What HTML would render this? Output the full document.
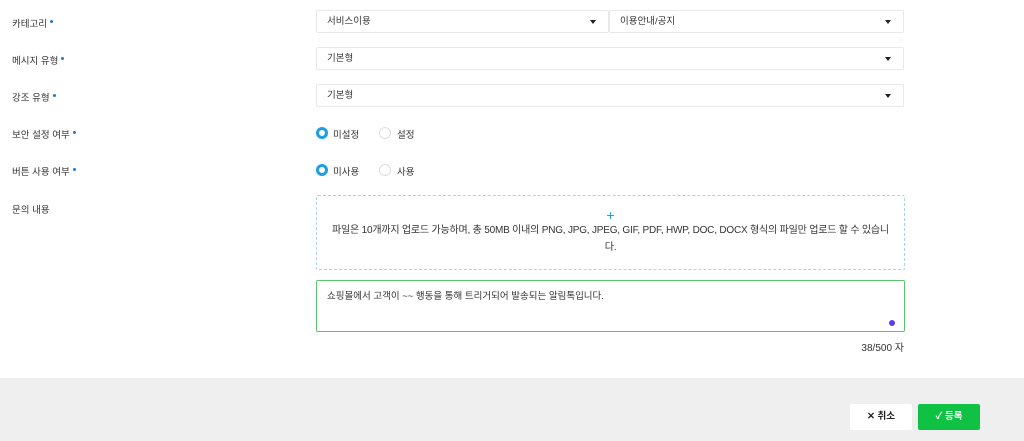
<!DOCTYPE html>
<html><head><meta charset="utf-8"><style>
*{box-sizing:border-box;margin:0;padding:0}
body{width:1024px;height:441px;background:#fff;font-family:"Liberation Sans","Noto Sans CJK KR",sans-serif;font-size:9.5px;color:#333;position:relative;overflow:hidden}
.a{position:absolute}
.lbl{left:12px}
.lbl i{display:inline-block;width:3px;height:3px;border-radius:50%;background:#1e7bd6;vertical-align:top;margin:4px 0 0 3px}
.sel{border:1px solid #e8e8e8;border-radius:2px;height:23px;padding:0 10px;line-height:21px;color:#333}
.sel:after{content:"";position:absolute;right:12px;top:9px;border-left:3.5px solid transparent;border-right:3.5px solid transparent;border-top:4px solid #222}
.rd{width:12px;height:12px;border-radius:50%;border:1px solid #ddd;background:#fff}
.rd.on{border:3px solid #1ea0e0}
</style></head><body>
<div class="a lbl" style="top:16px">카테고리<i></i></div>
<div class="a lbl" style="top:53px">메시지 유형<i></i></div>
<div class="a lbl" style="top:90px">강조 유형<i></i></div>
<div class="a lbl" style="top:127px">보안 설정 여부<i></i></div>
<div class="a lbl" style="top:164px">버튼 사용 여부<i></i></div>
<div class="a lbl" style="top:202px">문의 내용</div>

<div class="a sel" style="left:316px;top:10px;width:293px">서비스이용</div>
<div class="a sel" style="left:609px;top:10px;width:295px">이용안내/공지</div>
<div class="a sel" style="left:316px;top:47px;width:588px">기본형</div>
<div class="a sel" style="left:316px;top:84px;width:588px">기본형</div>

<div class="a rd on" style="left:316px;top:127px"></div><div class="a" style="left:333px;top:127px">미설정</div>
<div class="a rd" style="left:379px;top:127px"></div><div class="a" style="left:397px;top:127px">설정</div>
<div class="a rd on" style="left:316px;top:164px"></div><div class="a" style="left:333px;top:164px">미사용</div>
<div class="a rd" style="left:379px;top:164px"></div><div class="a" style="left:397px;top:164px">사용</div>

<div class="a" style="left:316px;top:195px;width:589px;height:75px;border:1px dashed #a8d4e6;border-radius:2px;text-align:center">
<div style="color:#1ea0e0;font-size:14px;line-height:14px;margin-top:12px">+</div>
<div style="line-height:17px;font-size:10px;letter-spacing:-0.2px;white-space:nowrap">파일은 10개까지 업로드 가능하며, 총 50MB 이내의 PNG, JPG, JPEG, GIF, PDF, HWP, DOC, DOCX 형식의 파일만 업로드 할 수 있습니<br>다.</div>
</div>

<div class="a" style="left:316px;top:280px;width:589px;height:52px;border:1px solid #5cc46a;border-radius:2px;padding:7px 10px">쇼핑몰에서 고객이 ~~ 행동을 통해 트리거되어 발송되는 알림톡입니다.
<div class="a" style="right:9px;bottom:5px;width:6px;height:6px;border-radius:50%;background:#5a3ef0"></div></div>
<div class="a" style="right:120px;top:339px;font-size:10px">38/500 자</div>

<div class="a" style="left:0;top:378px;width:1024px;height:63px;background:#efefef"></div>
<div class="a" style="left:850px;top:404px;width:62px;height:26px;background:#fff;border-radius:2px;text-align:center;line-height:26px;font-weight:bold;color:#222">✕ 취소</div>
<div class="a" style="left:918px;top:404px;width:62px;height:26px;background:#0fc244;border-radius:2px;text-align:center;line-height:26px;font-weight:bold;color:#fff">✓ 등록</div>
</body></html>
